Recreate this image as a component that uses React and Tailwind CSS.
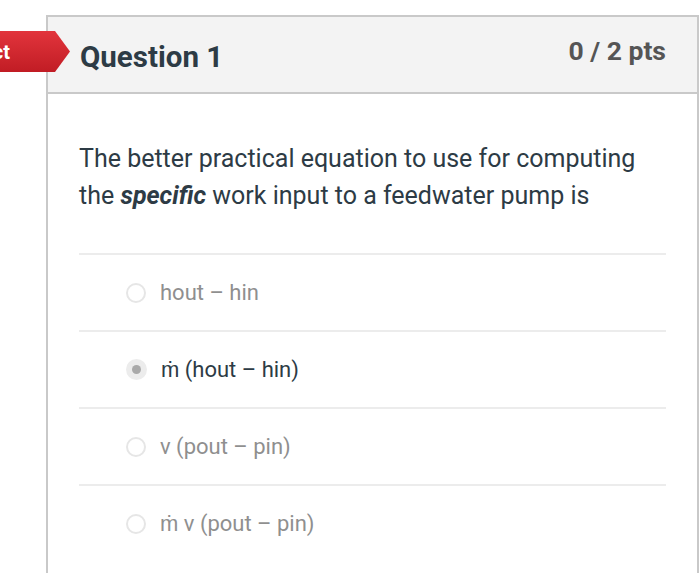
import React from "react";

const answers = [
  { id: 1, text: "hout – hin", selected: false },
  { id: 2, text: "ṁ (hout – hin)", selected: true },
  { id: 3, text: "v (pout – pin)", selected: false },
  { id: 4, text: "ṁ v (pout – pin)", selected: false },
];

function Radio({ selected }) {
  if (selected) {
    return (
      <span className="w-[21px] h-[21px] rounded-full bg-[#ececec] flex items-center justify-center shrink-0">
        <span className="w-[9px] h-[9px] rounded-full bg-[#a9a9a9]" />
      </span>
    );
  }
  return (
    <span className="w-[20px] h-[20px] rounded-full border-2 border-[#e6e6e6] bg-white shrink-0" />
  );
}

export default function App() {
  return (
    <div
      className="relative w-[700px] h-[573px] overflow-hidden bg-white pt-[15px] pl-[46px] pr-[1px]"
      style={{ fontFamily: "Roboto, 'Liberation Sans', sans-serif" }}
    >
      {/* result flag */}
      <div className="absolute left-0 top-[31px] h-[41px] w-[70px] bg-gradient-to-b from-[#e2343c] to-[#c11c24] [clip-path:polygon(0_0,55px_0,70px_50%,55px_100%,0_100%)] flex items-center justify-end pr-[60px] z-10">
        <span className="text-white font-bold text-[20px] whitespace-nowrap">Incorrect</span>
      </div>

      <div className="h-full border-l-[2px] border-r-[2px] border-t-[2px] border-[#c9c9c9]">
        <div className="h-[77px] bg-[#f3f3f3] border-b-[2px] border-[#c9c9c9] flex items-start justify-between pl-[32px] pr-[31px]">
          <h2 className="mt-[26px] text-[29.5px] font-bold text-[#2d3b45] leading-none">Question 1</h2>
          <div className="mt-[21px] text-[26.5px] font-bold text-[#555555] leading-none">0 / 2 pts</div>
        </div>

        <div className="px-[31px] pt-[46px]">
          <p className="text-[25px] leading-[37px] text-[#2d3b45]">
            The better practical equation to use for computing the{" "}
            <strong className="italic font-bold">specific</strong> work input to a feedwater pump is
          </p>

          <div className="mt-[39px]">
            {answers.map((a) => (
              <div
                key={a.id}
                className="h-[77px] border-t-[2px] border-[#ececec] flex items-center gap-[14px] pl-[47px]"
              >
                <Radio selected={a.selected} />
                <span
                  className={
                    a.selected
                      ? "text-[22px] text-[#2d3b45]"
                      : "text-[22px] text-[#8f8f8f]"
                  }
                >
                  {a.text}
                </span>
              </div>
            ))}
          </div>
        </div>
      </div>
    </div>
  );
}
